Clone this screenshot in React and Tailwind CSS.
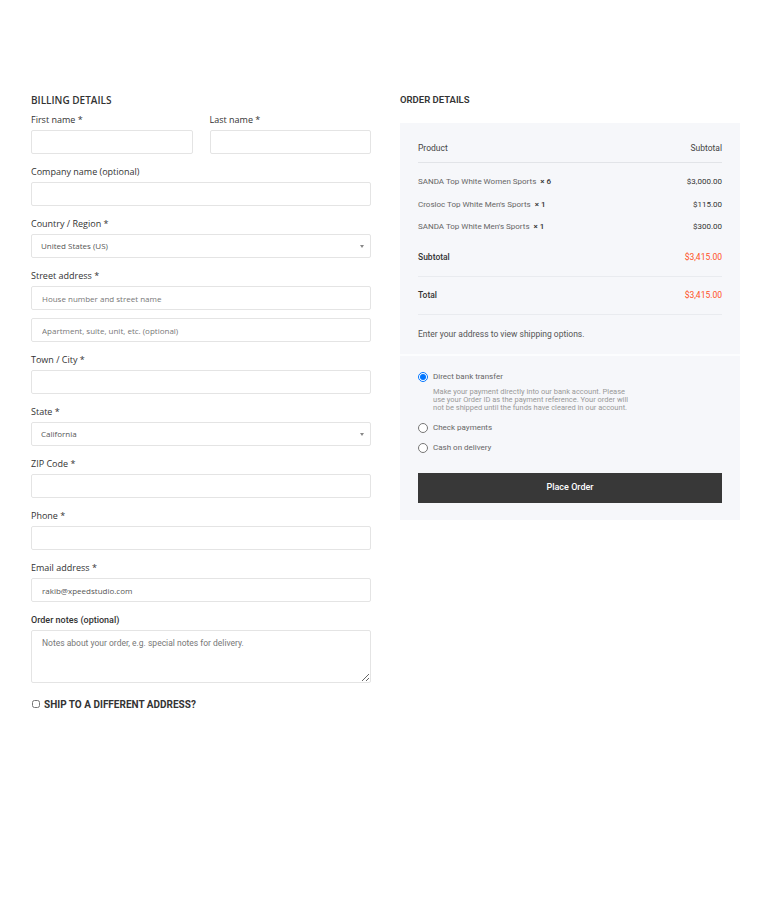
import { useState } from "react";

const segoe = { fontFamily: '"Open Sans", "Noto Sans", sans-serif' };
const barlow = { fontFamily: 'Roboto, "Liberation Sans", sans-serif' };

const Label = ({ children, alt }) => (
  <label
    style={alt ? barlow : segoe}
    className={`block h-3 leading-3 mb-1 text-[#333] ${alt ? "text-[9px] font-medium" : "text-[9px]"}`}
  >
    {children}
  </label>
);

const Input = ({ placeholder, value, className = "" }) => (
  <input
    style={segoe}
    defaultValue={value}
    placeholder={placeholder}
    className={`block w-full h-6 px-[10px] border border-[#e4e4e4] rounded-[2px] text-[8px] text-[#555] placeholder:text-[#777] outline-none bg-white ${className}`}
  />
);

const Select = ({ value }) => (
  <div className="relative">
    <select
      style={segoe}
      defaultValue={value}
      className="block w-full h-6 px-[9px] border border-[#e4e4e4] rounded-[2px] text-[8px] text-[#555] appearance-none bg-white outline-none"
    >
      <option>{value}</option>
    </select>
    <span className="absolute right-[7px] top-[11px] w-0 h-0 border-l-[2.5px] border-r-[2.5px] border-t-[3px] border-l-transparent border-r-transparent border-t-[#888]" />
  </div>
);

const Field = ({ label, alt, children }) => (
  <div>
    <Label alt={alt}>{label}</Label>
    {children}
  </div>
);

const items = [
  { name: "SANDA Top White Women Sports", qty: 6, price: "$3,000.00" },
  { name: "Crosloc Top White Men's Sports", qty: 1, price: "$115.00" },
  { name: "SANDA Top White Men's Sports", qty: 1, price: "$300.00" },
];

const payments = ["Direct bank transfer", "Check payments", "Cash on delivery"];

export default function App() {
  const [pay, setPay] = useState(0);

  return (
    <div className="w-[766px] h-[900px] bg-white">
      <div className="flex gap-[29px] pl-[31px] pt-[94px]">
        {/* Billing */}
        <div className="w-[340px]">
          <h3 style={segoe} className="h-3 leading-3 text-[10px] font-semibold text-[#333] uppercase mb-2">
            Billing Details
          </h3>
          <div className="flex flex-col gap-3">
            <div className="flex gap-[17px]">
              <div className="flex-1">
                <Field label="First name *">
                  <Input />
                </Field>
              </div>
              <div className="flex-1">
                <Field label="Last name *">
                  <Input />
                </Field>
              </div>
            </div>
            <Field label="Company name (optional)">
              <Input />
            </Field>
            <Field label="Country / Region *">
              <Select value="United States (US)" />
            </Field>
            <Field label="Street address *">
              <Input placeholder="House number and street name" />
              <Input placeholder="Apartment, suite, unit, etc. (optional)" className="mt-2" />
            </Field>
            <Field label="Town / City *">
              <Input />
            </Field>
            <Field label="State *">
              <Select value="California" />
            </Field>
            <Field label="ZIP Code *">
              <Input />
            </Field>
            <Field label="Phone *">
              <Input />
            </Field>
            <Field label="Email address *">
              <Input value="rakib@xpeedstudio.com" />
            </Field>
            <Field label="Order notes (optional)" alt>
              <textarea
                style={barlow}
                placeholder="Notes about your order, e.g. special notes for delivery."
                className="block w-full h-[53px] px-[10px] py-[6px] border border-[#e4e4e4] rounded-[2px] text-[8.5px] text-[#555] placeholder:text-[#777] outline-none"
              />
            </Field>
          </div>
          <label style={barlow} className="flex items-center gap-[4px] mt-[15px] h-3 text-[10px] font-bold text-[#333] uppercase">
            <input type="checkbox" className="w-[8px] h-[8px] m-0 ml-[1px]" />
            Ship to a different address?
          </label>
        </div>

        {/* Order */}
        <div className="w-[340px]" style={barlow}>
          <h3 className="h-3 leading-3 text-[9.5px] font-semibold text-[#333] uppercase">
            Order Details
          </h3>
          <div className="mt-[17px] bg-[#f6f7fa]">
            <div className="px-[18px] pt-[19px]">
              <div className="flex justify-between h-3 leading-3 text-[8.5px] text-[#444] pb-0 mb-2">
                <span>Product</span>
                <span>Subtotal</span>
              </div>
              <div className="border-t border-[#e2e4e8] pt-2">
                {items.map((it) => (
                  <div key={it.name} className="flex justify-between items-center h-[22.5px] text-[8px]">
                    <span className="text-[#666]">
                      {it.name} <span className="text-[#333] font-medium ml-[2px]">× {it.qty}</span>
                    </span>
                    <span className="text-[#333]">{it.price}</span>
                  </div>
                ))}
              </div>
              <div className="flex justify-between items-center h-[38px] border-b border-[#e9ebef] text-[8.5px]">
                <span className="text-[#333] font-medium">Subtotal</span>
                <span className="text-[#ff5124]">$3,415.00</span>
              </div>
              <div className="flex justify-between items-center h-[38.5px] border-b border-[#e9ebef] text-[8.5px]">
                <span className="text-[#333] font-medium">Total</span>
                <span className="text-[#ff5124]">$3,415.00</span>
              </div>
              <div className="flex items-center h-[39px] text-[8.5px] text-[#555]">
                Enter your address to view shipping options.
              </div>
            </div>
            <div className="h-[2px] bg-white/70" />
            <div className="px-[18px] pt-[15px] pb-[17px]">
              {payments.map((p, i) => (
                <div key={p}>
                  <label className={`flex items-center gap-[5px] h-3 text-[8px] text-[#666] ${i > 0 ? "mt-2" : ""}`}>
                    <input
                      type="radio"
                      name="pay"
                      checked={pay === i}
                      onChange={() => setPay(i)}
                      className="w-[10px] h-[10px] m-0"
                    />
                    {p}
                  </label>
                  {i === 0 && pay === 0 && (
                    <p className="ml-[15px] mt-[5px] pb-[2px] w-[200px] text-[7.5px] leading-[8px] text-[#999]">
                      Make your payment directly into our bank account. Please use your Order ID as the payment reference. Your order will not be shipped until the funds have cleared in our account.
                    </p>
                  )}
                </div>
              ))}
              <button className="mt-[19px] w-full h-[30px] bg-[#383838] text-white text-[9px] font-medium">
                Place Order
              </button>
            </div>
          </div>
        </div>
      </div>
    </div>
  );
}
